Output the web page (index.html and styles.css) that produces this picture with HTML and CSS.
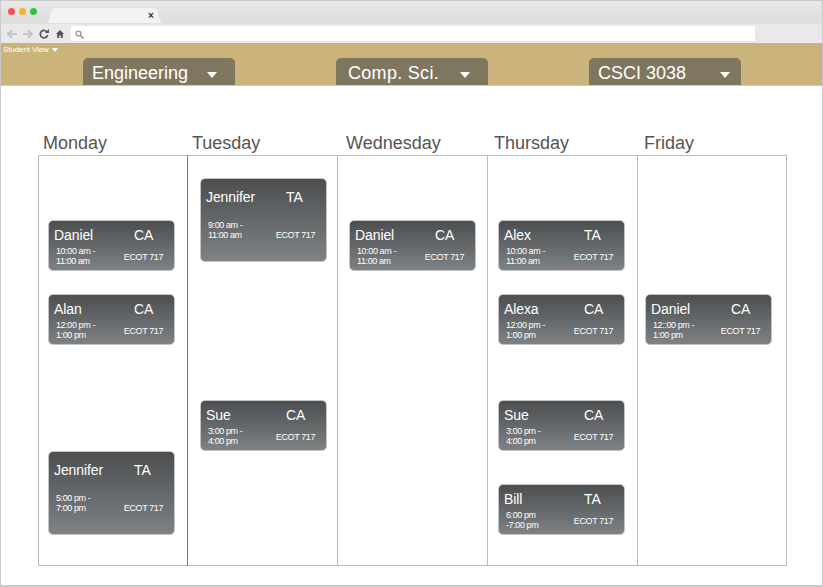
FILE: index.html
```
<!DOCTYPE html>
<html lang="en">
<head>
<meta charset="utf-8">
<title>Schedule</title>
<link rel="stylesheet" href="styles.css">
</head>
<body>
<div class="window">
  <div class="titlebar">
    <div class="lights"><i class="light red"></i><i class="light amber"></i><i class="light green"></i></div>
    <div class="tab">
      <svg class="tab-shape" width="124" height="15" viewBox="0 0 124 15"><path d="M0 15C4 15 5 13 6 9L7.500 3C8 1 9 0 11 0H110C112 0 113 1 113.500 3L115 9C116 13 117 15 124 15Z" fill="#f2f2f2"/></svg>
      <span class="tab-close">×</span>
    </div>
  </div>
  <div class="toolbar">
    <svg class="tool" width="10" height="10" viewBox="0 0 10 10"><path d="M5 1L1 5l4 4M1 5h9" fill="none" stroke="#c4c4c4" stroke-width="2"/></svg>
    <svg class="tool" width="10" height="10" viewBox="0 0 10 10"><path d="M5 1l4 4-4 4M9 5H0" fill="none" stroke="#c4c4c4" stroke-width="2"/></svg>
    <svg class="tool" width="10" height="10" viewBox="0 0 10 10"><path d="M8.300 3.500A3.700 3.700 0 1 0 8.600 6" fill="none" stroke="#555" stroke-width="1.700"/><path d="M6 4h4V0z" fill="#555"/></svg>
    <svg class="tool" width="10" height="10" viewBox="0 0 10 10"><path d="M5 1L1 5h1.200v4h2V6.500h1.600V9h2V5H9z" fill="#555"/></svg>
    <div class="address">
      <svg width="9" height="9" viewBox="0 0 9 9"><circle cx="3.500" cy="3.500" r="2.500" fill="none" stroke="#8a8a8a" stroke-width="1.200"/><path d="M5.500 5.500L8.500 8.500" stroke="#8a8a8a" stroke-width="1.400"/></svg>
    </div>
  </div>
  <header class="banner">
    <div class="view">Student View <i class="caret caret-small"></i></div>
    <nav class="filters">
      <div class="filter"><span>Engineering</span><i class="caret"></i></div>
      <div class="filter filter-mid"><span>Comp. Sci.</span><i class="caret"></i></div>
      <div class="filter filter-end"><span>CSCI 3038</span><i class="caret"></i></div>
    </nav>
  </header>
  <main class="week">
    <section class="day day-mon">
      <h2>Monday</h2>
      <div class="slots">
        <article class="card gap-65"><div class="top"><b>Daniel</b><b>CA</b></div><div class="bottom"><p>10:00 am -<br>11:00 am</p><p class="room">ECOT 717</p></div></article>
        <article class="card gap-24"><div class="top"><b>Alan</b><b>CA</b></div><div class="bottom"><p>12:00 pm -<br>1:00 pm</p><p class="room">ECOT 717</p></div></article>
        <article class="card tall gap-107"><div class="top"><b>Jennifer</b><b>TA</b></div><div class="bottom"><p>5:00 pm -<br>7:00 pm</p><p class="room">ECOT 717</p></div></article>
      </div>
    </section>
    <section class="day day-tue">
      <h2>Tuesday</h2>
      <div class="slots">
        <article class="card tall gap-23"><div class="top"><b>Jennifer</b><b>TA</b></div><div class="bottom"><p>9:00 am -<br>11:00 am</p><p class="room">ECOT 717</p></div></article>
        <article class="card gap-139"><div class="top"><b>Sue</b><b>CA</b></div><div class="bottom"><p>3:00 pm -<br>4:00 pm</p><p class="room">ECOT 717</p></div></article>
      </div>
    </section>
    <section class="day day-wed">
      <h2>Wednesday</h2>
      <div class="slots">
        <article class="card gap-65"><div class="top"><b>Daniel</b><b>CA</b></div><div class="bottom"><p>10:00 am -<br>11:00 am</p><p class="room">ECOT 717</p></div></article>
      </div>
    </section>
    <section class="day day-thu">
      <h2>Thursday</h2>
      <div class="slots">
        <article class="card gap-65"><div class="top"><b>Alex</b><b>TA</b></div><div class="bottom"><p>10:00 am -<br>11:00 am</p><p class="room">ECOT 717</p></div></article>
        <article class="card gap-24"><div class="top"><b>Alexa</b><b>CA</b></div><div class="bottom"><p>12:00 pm -<br>1:00 pm</p><p class="room">ECOT 717</p></div></article>
        <article class="card gap-56"><div class="top"><b>Sue</b><b>CA</b></div><div class="bottom"><p>3:00 pm -<br>4:00 pm</p><p class="room">ECOT 717</p></div></article>
        <article class="card gap-34"><div class="top"><b>Bill</b><b>TA</b></div><div class="bottom"><p>6:00 pm<br>-7:00 pm</p><p class="room">ECOT 717</p></div></article>
      </div>
    </section>
    <section class="day day-fri">
      <h2>Friday</h2>
      <div class="slots">
        <article class="card gap-139"><div class="top"><b>Daniel</b><b>CA</b></div><div class="bottom"><p>12::00 pm -<br>1:00 pm</p><p class="room">ECOT 717</p></div></article>
      </div>
    </section>
  </main>
</div>
</body>
</html>
```
FILE: styles.css
```
* { box-sizing: border-box; }
html, body { margin: 0; height: 587px; overflow: hidden; background: #fff; }
body { font-family: "Liberation Sans", Arial, sans-serif; }
.window {
  width: 823px;
  height: 587px;
  background: #fff;
  border: 1px solid #c9c9c9;
  border-bottom-width: 2px;
  overflow: hidden;
}
.titlebar {
  height: 22px;
  display: flex;
  align-items: flex-start;
  background: linear-gradient(#e9e9e9, #dcdcdc);
}
.lights { display: flex; gap: 4px; padding: 7px 0 0 7px; width: 35px; }
.light { width: 7px; height: 7px; border-radius: 50%; display: block; flex: none; }
.red { background: #f2544f; }
.amber { background: #f5b22e; }
.green { background: #2fc43f; }
.tab { position: relative; width: 124px; height: 15px; margin: 7px 0 0 8px; }
.tab-shape { display: block; }
.tab-close { position: absolute; left: 104px; top: 2px; font-size: 10px; line-height: 12px; font-weight: bold; color: #333; }
.toolbar {
  height: 20px;
  display: flex;
  align-items: center;
  gap: 6px;
  padding: 0 67px 0 6px;
  background: #e9e9e9;
  border-top: 1px solid #dedede;
}
.tool { flex: none; }
.address {
  flex: 1;
  height: 15px;
  padding: 4px 0 0 4px;
  background: #fff;
  display: flex;
}
.banner {
  height: 43px;
  background: #cbb47c;
  border-bottom: 1px solid #d8cba4;
  display: flex;
  flex-direction: column;
  justify-content: space-between;
}
.view {
  color: #fff;
  font-size: 8px;
  line-height: 12px;
  padding: 1px 0 0 2px;
  letter-spacing: -0.1px;
  display: flex;
  align-items: center;
  gap: 3px;
}
.caret {
  width: 0;
  height: 0;
  border-left: 5.500px solid transparent;
  border-right: 5.500px solid transparent;
  border-top: 6px solid #fff;
  display: block;
}
.caret-small { border-left-width: 3px; border-right-width: 3px; border-top-width: 4px; }
.filters { display: flex; gap: 101px; padding-left: 82px; }
.filter {
  width: 152px;
  height: 27px;
  background: #7f7660;
  border-radius: 5px 5px 0 0;
  color: #fff;
  font-size: 18px;
  line-height: 20px;
  padding: 0 18px 0 9px;
  display: flex;
  justify-content: space-between;
  align-items: center;
}
.filter span { padding-top: 2px; }
.filter-mid { padding-left: 12px; }
.filter-mid span { letter-spacing: 0.3px; }
.filter-end { padding-right: 11px; }
.filter .caret { margin-top: 7px; }
.week {
  display: flex;
  padding: 44px 0 0 37px;
}
.day { width: 150px; flex: none; }
.day-mon { width: 149px; }
.day h2 {
  margin: 0;
  height: 25px;
  font-size: 18px;
  line-height: 26px;
  font-weight: normal;
  color: #555;
  padding-left: 5px;
}
.day-wed h2 { padding-left: 9px; }
.day-thu h2, .day-fri h2 { padding-left: 7px; }
.slots {
  height: 411px;
  padding-left: 9px;
  border: 1px solid #bcbcbc;
  border-right: 0;
  display: flex;
  flex-direction: column;
}
.day-tue .slots { border-left-color: #777; padding-left: 12px; }
.day-wed .slots { padding-left: 11px; }
.day-thu .slots { padding-left: 10px; }
.day-fri .slots { border-right: 1px solid #bcbcbc; padding-left: 7px; }
.card {
  width: 127px;
  height: 51px;
  flex: none;
  border: 1px solid #c4c4c4;
  border-radius: 5px;
  background: linear-gradient(#4c4e50, #7e8284);
  color: #fff;
  padding: 0 6px 0 5px;
  display: flex;
  flex-direction: column;
}
.card.tall { height: 84px; }
.top {
  display: flex;
  font-size: 14px;
  line-height: 16px;
  padding-top: 6px;
}
.tall .top { padding-top: 10px; }
.top b { font-weight: normal; letter-spacing: -0.1px; }
.top b:first-child { width: 80px; }
.bottom {
  display: flex;
  justify-content: space-between;
  padding: 3px 5px 0 2px;
  font-size: 9px;
  line-height: 10px;
  letter-spacing: -0.4px;
}
.tall .bottom { padding-top: 15px; }
.bottom p { margin: 0; }
.room { padding-top: 6px; }
.tall .room { padding-top: 10px; }
.gap-23 { margin-top: 22px; }
.gap-24 { margin-top: 23px; }
.gap-34 { margin-top: 33px; }
.gap-56 { margin-top: 55px; }
.gap-65 { margin-top: 64px; }
.gap-107 { margin-top: 106px; }
.gap-139 { margin-top: 138px; }
```
